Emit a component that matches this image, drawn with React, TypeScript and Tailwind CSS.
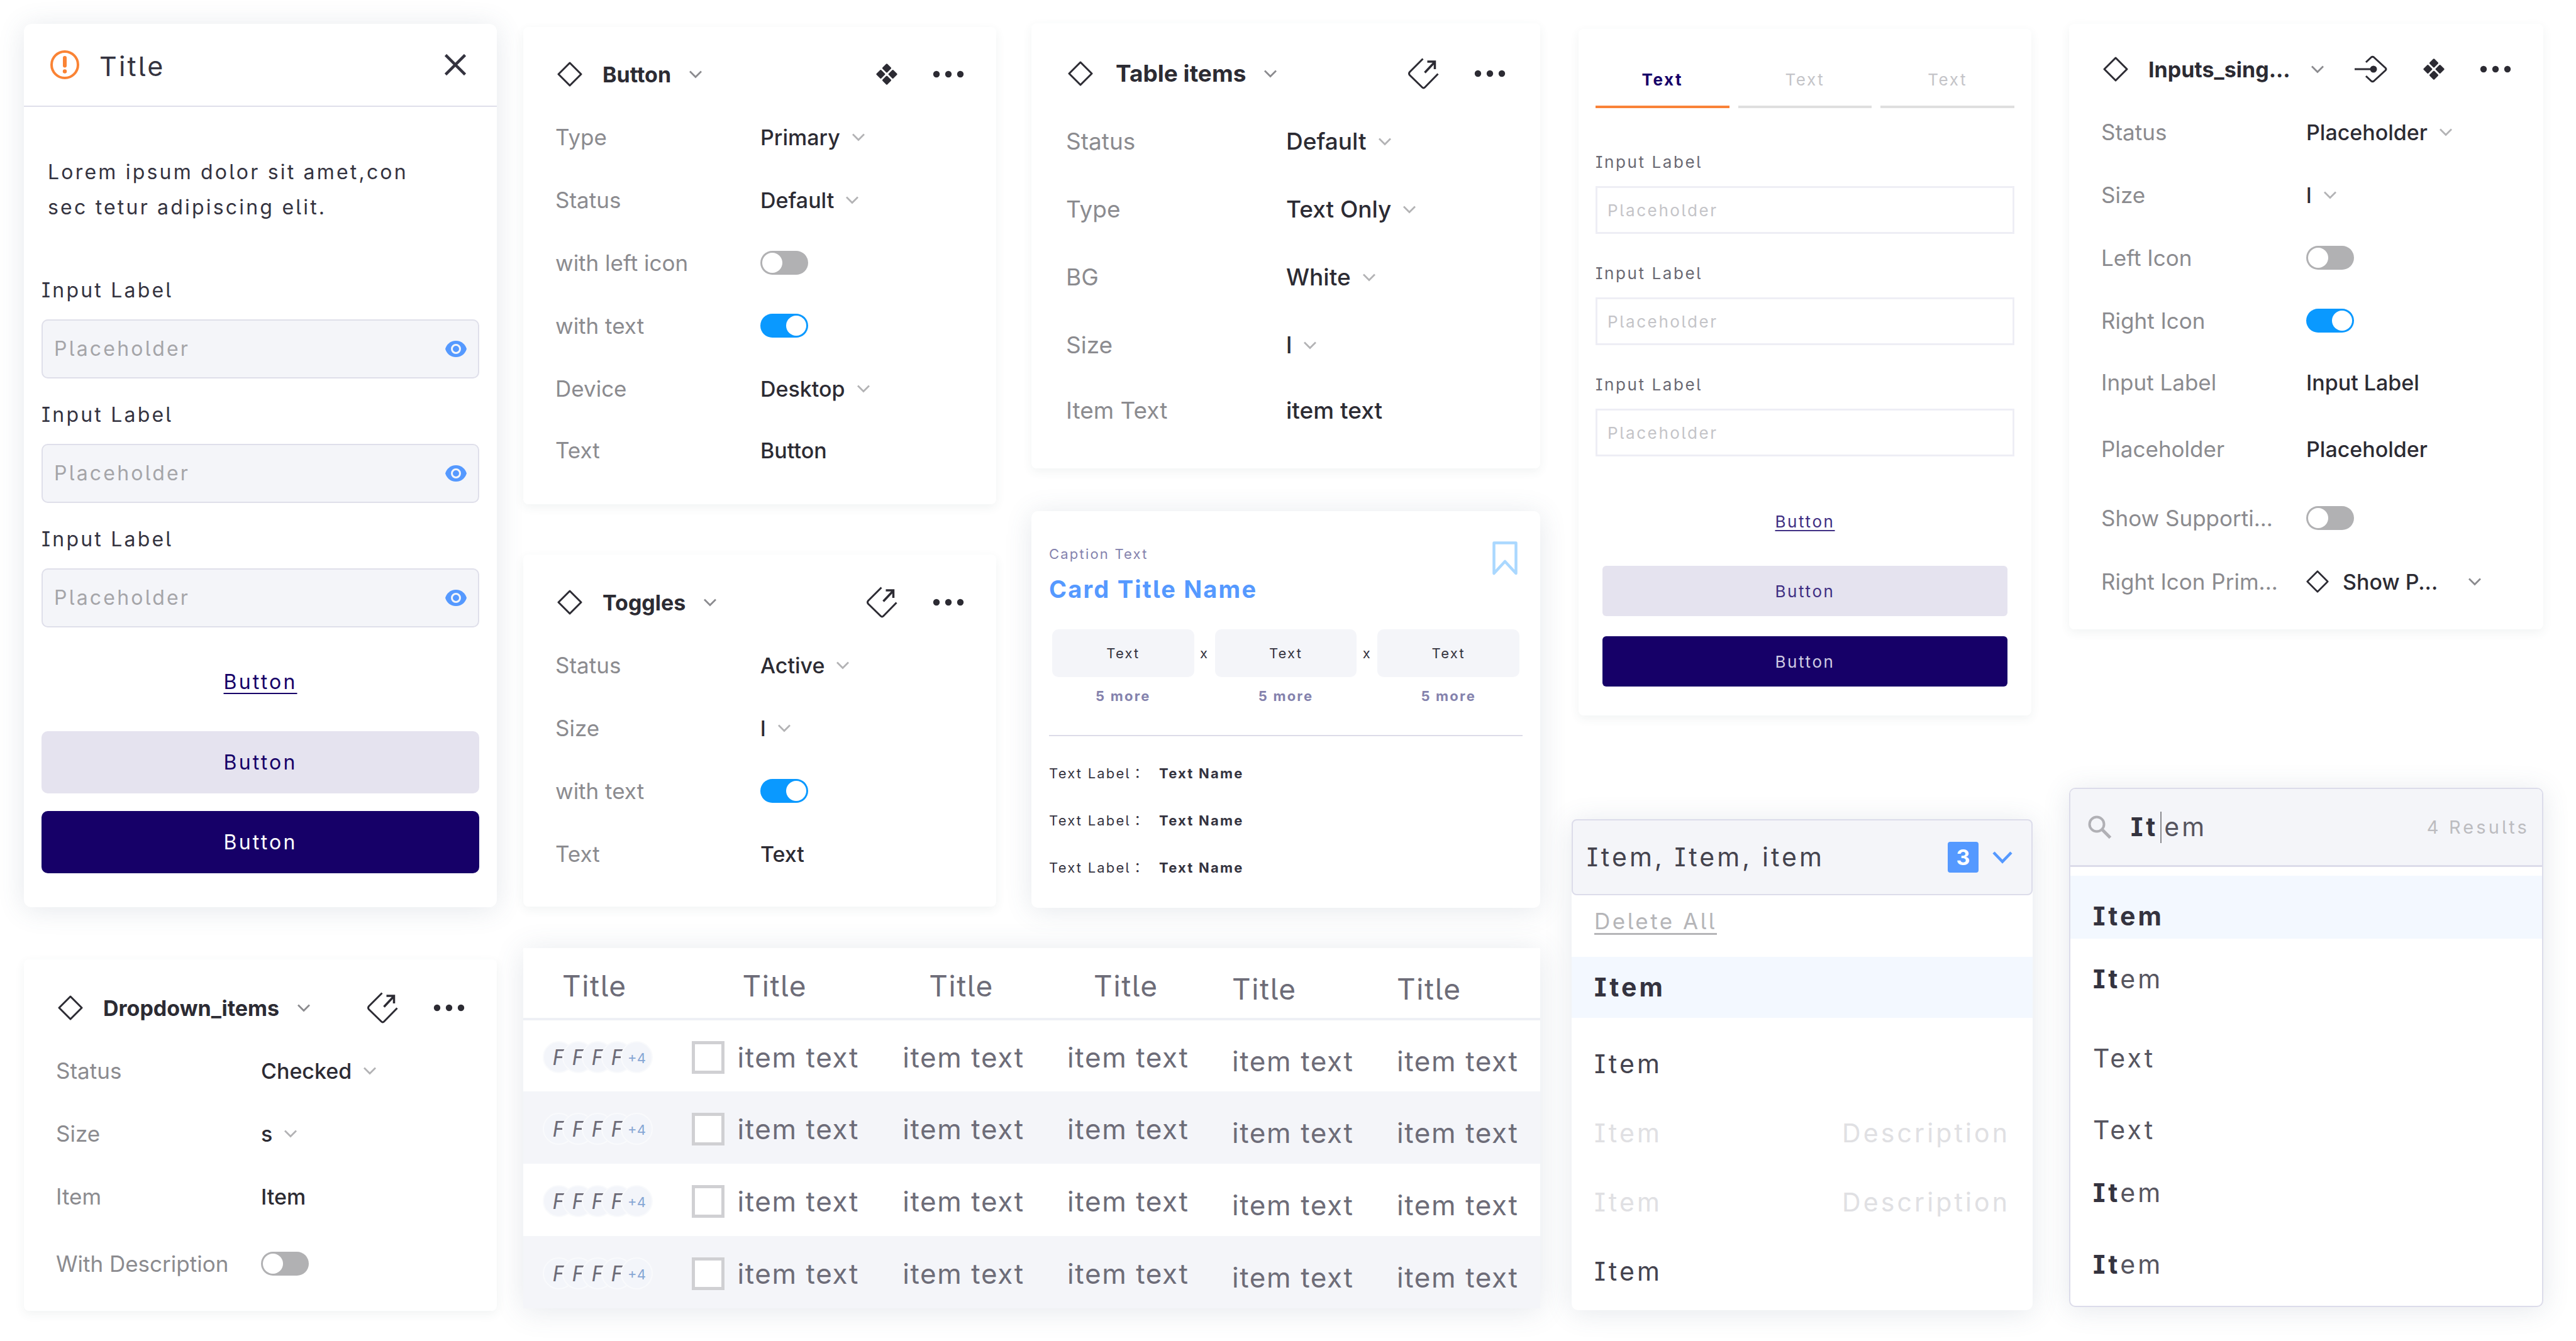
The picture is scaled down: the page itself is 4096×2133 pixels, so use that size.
import { Fragment, useId } from "react";
import type { ReactNode } from "react";

const raised = "bg-white shadow-[0_4px_44px_rgba(70,90,120,0.14)]";
const flat = "bg-white shadow-[0_5px_16px_rgba(60,90,80,0.07)]";
const spaced = "tracking-widest [font-feature-settings:'cv05','cv08']";

/* ---------- icons ---------- */

function Chevron({ className }: { className: string }) {
  return (
    <svg viewBox="0 0 22 14" className={className} fill="none" stroke="currentColor" aria-hidden="true">
      <path d="M2 2.5 11 11.5 20 2.5" strokeWidth="2.8" />
    </svg>
  );
}

function Diamond({ className }: { className: string }) {
  return (
    <svg viewBox="0 0 40 40" className={className} fill="none" stroke="currentColor" strokeWidth="3" strokeLinejoin="round" aria-hidden="true">
      <path d="M20 2 38 20 20 38 2 20Z" />
    </svg>
  );
}

function ComponentIcon() {
  return (
    <svg viewBox="0 0 34 34" className="size-[34px]" fill="currentColor" aria-hidden="true">
      {[
        [17, 7.4],
        [7.4, 17],
        [26.6, 17],
        [17, 26.6],
      ].map(([x, y]) => (
        <path
          key={`${x}-${y}`}
          d={`M${x} ${y - 5.5}L${x + 5.5} ${y}L${x} ${y + 5.5}L${x - 5.5} ${y}Z`}
          stroke="currentColor"
          strokeWidth="3"
          strokeLinejoin="round"
        />
      ))}
    </svg>
  );
}

function DetachIcon() {
  return (
    <svg viewBox="0 0 50 50" className="size-[50px]" fill="none" stroke="currentColor" strokeWidth="3" strokeLinejoin="round" aria-hidden="true">
      <path d="M24.500 1.500 3.500 22.500Q1.500 25 3.500 27.500L23.500 47Q25.500 49 27.500 47L48.500 25.500" />
      <path d="M27.500 23.500 43 7M31.500 6H43.500V18" strokeWidth="3.500" strokeLinejoin="miter" />
    </svg>
  );
}

function EnterIcon() {
  return (
    <svg viewBox="0 0 54 44" className="h-11 w-[54px]" fill="none" stroke="currentColor" strokeWidth="3" strokeLinejoin="round" aria-hidden="true">
      <path d="M1 22H30" />
      <path d="M19 11 27.500 3Q29.500 1.500 31.500 3L50 20Q52 22 50 24L31.500 41Q29.500 42.500 27.500 41L19 33" />
      <circle cx="31" cy="22" r="5.500" fill="currentColor" stroke="none" />
    </svg>
  );
}

function Dots() {
  return (
    <svg viewBox="0 0 50 12" className="h-3 w-[50px]" fill="currentColor" aria-hidden="true">
      <circle cx="6" cy="6" r="5.200" />
      <circle cx="25" cy="6" r="5.200" />
      <circle cx="44" cy="6" r="5.200" />
    </svg>
  );
}

function Eye() {
  return (
    <svg viewBox="0 0 34 26" className="h-[26px] w-[34px]" aria-hidden="true">
      <path d="M17 0C26 0 32 6 34 13C32 20 26 26 17 26C8 26 2 20 0 13C2 6 8 0 17 0Z" fill="#5599ff" />
      <circle cx="17" cy="13" r="6.500" fill="#5599ff" stroke="#f4f5f9" strokeWidth="3" />
    </svg>
  );
}

/* ---------- property panels ---------- */

type Row = {
  label: string;
  kind: "select" | "text" | "toggle" | "swap";
  value?: string;
  on?: boolean;
  height?: string;
};

function PropertyRow({ row, large }: { row: Row; large: boolean }) {
  const id = useId();
  const height = row.height ?? (large ? "h-[108px]" : "h-[100px]");
  const columns = large ? "grid-cols-[350px_1fr]" : "grid-cols-[326px_1fr]";
  return (
    <div className={`grid items-center ${columns} ${height}`}>
      <label htmlFor={id} className={`truncate text-[#8b8b8f] ${large ? "" : "text-[35px]"}`}>
        {row.label}
      </label>
      {row.kind === "select" && (
        <div className="flex items-center gap-[18px]">
          <select id={id} defaultValue={row.value} className="field-sizing-content cursor-pointer appearance-none bg-transparent font-medium">
            <option>{row.value}</option>
          </select>
          <Chevron className="h-3.5 w-[22px] text-[#b3b3b5]" />
        </div>
      )}
      {row.kind === "text" && (
        <input id={id} type="text" defaultValue={row.value} className="w-full min-w-0 bg-transparent font-medium outline-none" />
      )}
      {row.kind === "toggle" && (
        <input
          id={id}
          type="checkbox"
          role="switch"
          defaultChecked={row.on}
          className="h-[38px] w-[76px] cursor-pointer appearance-none rounded-full bg-[#b1b1b3] p-[3px] before:block before:size-8 before:rounded-full before:bg-white checked:bg-[#0a99ff] checked:before:ml-[38px]"
        />
      )}
      {row.kind === "swap" && (
        <button id={id} type="button" className="flex cursor-pointer items-center font-medium">
          <Diamond className="size-9" />
          <span className="ml-[22px]">{row.value}</span>
          <Chevron className="ml-12 h-3.5 w-[22px] text-[#8b8b8f]" />
        </button>
      )}
    </div>
  );
}

function PropertyPanel({
  title,
  icons,
  rows,
  large = false,
  titleGap = "gap-7",
  className,
}: {
  title: string;
  icons: { name: string; icon: ReactNode }[];
  rows: Row[];
  large?: boolean;
  titleGap?: string;
  className: string;
}) {
  return (
    <section className={`rounded-lg text-[#2c2b33] ${large ? "px-[55px] text-[37px]" : "px-[51px] text-[34px]"} ${flat} ${className}`}>
      <header className={`flex items-center justify-between pl-[3px] ${large ? "h-[108px]" : "h-[100px]"}`}>
        <h2 className="font-bold">
          <button type="button" className={`flex cursor-pointer items-center ${titleGap}`}>
            <span className={`flex items-center ${large ? "gap-9" : "gap-8"}`}>
              <Diamond className="size-10" />
              {title}
            </span>
            <Chevron className="h-3.5 w-[22px] text-[#8b8b8f]" />
          </button>
        </h2>
        <div className="flex items-center gap-14">
          {icons.map(({ name, icon }) => (
            <button key={name} type="button" aria-label={name} className="cursor-pointer">
              {icon}
            </button>
          ))}
          <button type="button" aria-label="More" className="cursor-pointer">
            <Dots />
          </button>
        </div>
      </header>
      {rows.map((row) => (
        <PropertyRow key={row.label} row={row} large={large} />
      ))}
    </section>
  );
}

const detach = { name: "Go to main component", icon: <DetachIcon /> };
const component = { name: "Component", icon: <ComponentIcon /> };
const enter = { name: "Nested instance", icon: <EnterIcon /> };

/* ---------- modal ---------- */

function ModalField() {
  const id = useId();
  return (
    <div>
      <label htmlFor={id} className="block leading-11">
        Input Label
      </label>
      <div className="mt-6 flex h-[94px] items-center rounded-[10px] border-2 border-[#dfdfea] bg-[#f4f5f9] px-[18px]">
        <input id={id} type="text" placeholder="Placeholder" className="min-w-0 flex-1 bg-transparent tracking-widest outline-none placeholder:text-[#a5a5a9]" />
        <button type="button" aria-label="Show value" className="cursor-pointer">
          <Eye />
        </button>
      </div>
    </div>
  );
}

function Modal() {
  return (
    <section role="dialog" aria-label="Title" className={`rounded-xl pb-[54px] text-[32px] text-[#34333f] ${raised} ${spaced}`}>
      <header className="flex h-[132px] items-center border-b-2 border-[#dfdfea] pr-[49px] pl-[42px]">
        <svg viewBox="0 0 46 46" className="size-[46px]" aria-hidden="true">
          <circle cx="23" cy="23" r="21" fill="none" stroke="#fa8334" strokeWidth="4" />
          <path d="M23 12V24.500" stroke="#fa8334" strokeWidth="6" strokeLinecap="round" />
          <circle cx="23" cy="33.500" r="3.200" fill="#fa8334" />
        </svg>
        <h2 className="ml-8 flex-1 pt-1 text-[43px]">Title</h2>
        <button type="button" aria-label="Close" className="cursor-pointer">
          <svg viewBox="0 0 34 34" className="size-[34px]" fill="none" stroke="currentColor" strokeWidth="4.500" aria-hidden="true">
            <path d="M1.500 1.500 32.500 32.500M32.500 1.500 1.500 32.500" />
          </svg>
        </button>
      </header>
      <div className="px-7 pt-[76px]">
        <p className="px-2.5 leading-14">
          Lorem ipsum dolor sit amet,con
          <br />
          sec tetur adipiscing elit.
        </p>
        <div className="mt-[82px] flex flex-col gap-9">
          <ModalField />
          <ModalField />
          <ModalField />
        </div>
        <div className="mt-[67px] flex flex-col text-[#160068]">
          <a href="#button" className="self-center leading-10 underline decoration-2 underline-offset-[6px]">
            Button
          </a>
          <button type="button" className="mt-[58px] h-[99px] cursor-pointer rounded-[10px] bg-[#e5e3ef]">
            Button
          </button>
          <button type="button" className="mt-7 h-[99px] cursor-pointer rounded-[10px] bg-[#160068] text-white">
            Button
          </button>
        </div>
      </div>
    </section>
  );
}

/* ---------- summary card ---------- */

function SummaryCard() {
  return (
    <section className={`mt-17 rounded-[10px] px-7 pt-[52px] pb-[26px] text-[22px] text-[#34333f] ${raised} ${spaced}`}>
      <div className="flex items-start justify-between pr-2">
        <div>
          <p className="leading-8 text-[#8482ad]">Caption Text</p>
          <h2 className="mt-4 text-[38px] leading-12 font-bold text-[#5599ff]">Card Title Name</h2>
        </div>
        <button type="button" aria-label="Bookmark" className="-mt-1 cursor-pointer">
          <svg viewBox="0 0 40 54" className="h-[54px] w-10" fill="none" stroke="#aad8ff" strokeWidth="4.500" strokeLinejoin="round" aria-hidden="true">
            <path d="M2.500 2.500H37.500V51L20 32 2.500 51Z" />
          </svg>
        </button>
      </div>
      <div className="mt-10 flex px-[5px] text-center">
        {[0, 1, 2].map((i) => (
          <Fragment key={i}>
            {i > 0 && <span className="w-[33px] leading-[76px]">x</span>}
            <div className="flex-1">
              <button type="button" className="block h-[76px] w-full cursor-pointer rounded-[10px] bg-[#f4f5f9]">
                Text
              </button>
              <p className="mt-3.5 leading-8 font-bold text-[#8482ad]">5 more</p>
            </div>
          </Fragment>
        ))}
      </div>
      <dl className="mt-[46px] border-t-2 border-[#dcdbe8] pt-[22px]">
        {[0, 1, 2].map((i) => (
          <div key={i} className="grid h-[75px] grid-cols-[175px_1fr] items-center">
            <dt className="font-['Inter','Noto_Sans_CJK_JP',sans-serif] whitespace-nowrap">Text Label：</dt>
            <dd className="font-bold">Text Name</dd>
          </div>
        ))}
      </dl>
    </section>
  );
}

/* ---------- data table ---------- */

function DataTable() {
  return (
    <table className={`mt-[64px] w-full table-fixed border-collapse text-left text-[#6d6c78] ${raised} ${spaced}`}>
      <colgroup>
        <col className="w-[16.6%]" />
        <col className="w-[20.7%]" />
        <col className="w-[16.2%]" />
        <col className="w-[16.2%]" />
        <col className="w-[16.2%]" />
        <col className="w-[14.1%]" />
      </colgroup>
      <thead>
        <tr className="h-[113px] border-b-4 border-[#eef0f5] text-[46px]">
          {["pl-[62px]", "pl-20", "pl-[42px]", "pl-[42px]", "", ""].map((pad, i) => (
            <th key={i} scope="col" className={`font-normal ${pad} ${i > 3 ? "pt-5" : "pt-2.5"}`}>
              Title
            </th>
          ))}
        </tr>
      </thead>
      <tbody>
        {[0, 1, 2, 3].map((r) => (
          <tr key={r} className="h-[115px] text-[44px] whitespace-nowrap odd:bg-white even:bg-[#f4f5f9]">
            <td className="pt-1 pl-[31px]">
              <div className="flex -space-x-5 tracking-normal italic">
                {[0, 1, 2, 3].map((a) => (
                  <span key={a} className="flex size-[51px] items-center justify-center rounded-full border-2 border-[#f9fafc] bg-[#f3f5fa] text-[34px]">
                    F
                  </span>
                ))}
                <span className="flex size-[51px] items-center justify-center rounded-full border-2 border-[#f9fafc] bg-[#f3f5fa] pt-1 text-[22px] text-[#86a6d4] not-italic">
                  +4
                </span>
              </div>
            </td>
            {[1, 2, 3, 4, 5].map((c) => (
              <td key={c} className={c > 3 ? "pt-4" : "pt-1"}>
                {c === 1 ? (
                  <label className="flex items-center gap-5">
                    <input type="checkbox" className="size-[52px] appearance-none border-5 border-[#d0d0d3] bg-white checked:bg-[#5599ff]" />
                    item text
                  </label>
                ) : (
                  "item text"
                )}
              </td>
            ))}
          </tr>
        ))}
      </tbody>
    </table>
  );
}

/* ---------- tabbed form ---------- */

function FormField() {
  const id = useId();
  return (
    <div>
      <label htmlFor={id} className="block leading-8 text-[#6a6973]">
        Input Label
      </label>
      <input
        id={id}
        type="text"
        placeholder="Placeholder"
        className="mt-[22px] block h-[76px] w-full border-3 border-[#eeeef5] px-4 tracking-widest outline-none placeholder:text-[#c4c4c8]"
      />
    </div>
  );
}

function TabbedForm() {
  return (
    <section className={`mr-0.5 ml-[11px] rounded-lg px-[27px] pt-[50px] pb-[46px] text-[26px] ${flat} ${spaced}`}>
      <div role="tablist" className="grid grid-cols-3 gap-3.5">
        <button role="tab" aria-selected="true" type="button" className="h-[76px] cursor-pointer border-b-4 border-[#f98238] pb-3 font-bold text-[#160068]">
          Text
        </button>
        {[0, 1].map((i) => (
          <button key={i} role="tab" aria-selected="false" type="button" className="h-[76px] cursor-pointer border-b-4 border-[#dfdfdf] pb-3 text-[#c4c4c8]">
            Text
          </button>
        ))}
      </div>
      <div className="mt-[70px] flex flex-col gap-[47px]">
        <FormField />
        <FormField />
        <FormField />
      </div>
      <div className="mt-[88px] flex flex-col px-[11px] text-[#3f2f83]">
        <a href="#button" className="self-center leading-8 underline decoration-2 underline-offset-4">
          Button
        </a>
        <button type="button" className="mt-[54px] h-20 cursor-pointer rounded-md bg-[#e5e3ef]">
          Button
        </button>
        <button type="button" className="mt-8 h-20 cursor-pointer rounded-md bg-[#160068] text-[#cfcbe2]">
          Button
        </button>
      </div>
    </section>
  );
}

/* ---------- multi select ---------- */

function MultiSelect() {
  const items = [
    { name: "Item" },
    { name: "Item", description: "Description" },
    { name: "Item", description: "Description" },
    { name: "Item" },
  ];
  return (
    <section className={`mt-[165px] rounded-[10px] pb-1.5 text-[41px] text-[#44434e] ${raised} ${spaced}`}>
      <button type="button" aria-expanded="true" className="flex h-[121px] w-full cursor-pointer items-center rounded-lg border-2 border-[#dcdcea] bg-[#f4f5f9] pr-[30px] pl-[22px] tracking-widest">
        <span className="flex-1 text-left">Item, Item, item</span>
        <span className="flex size-[49px] items-center justify-center rounded-sm bg-[#5599ff] text-[34px] font-bold tracking-normal text-white">3</span>
        <svg viewBox="0 0 32 20" className="ml-[22px] h-5 w-8" fill="none" stroke="#5599ff" strokeWidth="4.500" aria-hidden="true">
          <path d="M2 2 16 16.500 30 2" />
        </svg>
      </button>
      <div className="flex h-[98px] items-center px-9 pb-4">
        <button type="button" className="cursor-pointer text-[35px] tracking-widest text-[#b5b5b8] underline decoration-3 underline-offset-[6px]">
          Delete All
        </button>
      </div>
      <ul>
        <li className="mb-[19px] flex h-[97px] items-center bg-[#f3f8ff] px-9 font-bold text-[#34333f]">Item</li>
        {items.map((item, i) => (
          <li key={i} className={`flex h-[110px] items-center justify-between px-9 ${item.description ? "text-[#e0e0e3]" : ""}`}>
            <span>{item.name}</span>
            {item.description && <span>{item.description}</span>}
          </li>
        ))}
      </ul>
    </section>
  );
}

/* ---------- search box ---------- */

function SearchBox() {
  const results = [
    { match: "Item", rest: "", gap: "bg-[#f3f8ff]" },
    { match: "It", rest: "em", gap: "" },
    { match: "", rest: "Text", gap: "mt-[26px]" },
    { match: "", rest: "Text", gap: "mt-3.5" },
    { match: "It", rest: "em", gap: "" },
    { match: "It", rest: "em", gap: "mt-3.5" },
  ];
  return (
    <section className={`mt-[252px] overflow-hidden rounded-[10px] border-2 border-[#dcdcea] pb-[30px] text-[41px] text-[#56555f] ${raised} ${spaced}`}>
      <div className="flex h-[124px] items-center border-b-3 border-[#dcdcea] bg-[#f4f5f9] pr-5 pl-7">
        <svg viewBox="0 0 38 38" className="size-[38px]" fill="none" stroke="#b0b0b5" strokeWidth="4" aria-hidden="true">
          <circle cx="14" cy="14" r="11.500" />
          <path d="M22.500 22.500 35.500 35.500" strokeWidth="5" />
        </svg>
        <div className="ml-[30px] flex flex-1 items-center">
          <input type="text" aria-label="Search" defaultValue="It" className="field-sizing-content bg-transparent font-bold tracking-widest text-[#34333f] outline-none" />
          <span className="ml-1 h-[50px] w-0.5 bg-[#8b8b8f]" />
          <span className="ml-1">em</span>
        </div>
        <span className="text-[29px] text-[#bcbcc0]">4 Results</span>
      </div>
      <ul className="pt-3.5">
        {results.map((result, i) => (
          <li key={i} className={`flex h-[100px] items-center px-9 pt-[30px] ${result.gap}`}>
            <strong className="text-[#34333f]">{result.match}</strong>
            {result.rest}
          </li>
        ))}
      </ul>
    </section>
  );
}

/* ---------- page ---------- */

export default function App() {
  return (
    <main className="flex min-h-screen items-start bg-white pr-[52px] pb-11 pl-[38px] font-['Inter','Liberation_Sans',sans-serif] leading-normal">
      <div className="min-w-0 flex-[752] pt-[38px]">
        <Modal />
        <PropertyPanel
          className="mt-[83px] pt-[27px] pb-[18px]"
          title="Dropdown_items"
          icons={[detach]}
          rows={[
            { label: "Status", kind: "select", value: "Checked" },
            { label: "Size", kind: "select", value: "s" },
            { label: "Item", kind: "text", value: "Item" },
            { label: "With Description", kind: "toggle", height: "h-[114px]" },
          ]}
        />
      </div>

      <div className="ml-[42px] min-w-0 flex-[1617]">
        <div className="flex items-start">
          <div className="min-w-0 flex-[752] pt-[43px]">
            <PropertyPanel
              className="pt-[25px] pb-[38px]"
              title="Button"
              icons={[component]}
              rows={[
                { label: "Type", kind: "select", value: "Primary" },
                { label: "Status", kind: "select", value: "Default" },
                { label: "with left icon", kind: "toggle" },
                { label: "with text", kind: "toggle", on: true },
                { label: "Device", kind: "select", value: "Desktop" },
                { label: "Text", kind: "text", value: "Button", height: "h-24" },
              ]}
            />
            <PropertyPanel
              className="mt-20 pt-[26px] pb-[34px]"
              title="Toggles"
              icons={[detach]}
              rows={[
                { label: "Status", kind: "select", value: "Active" },
                { label: "Size", kind: "select", value: "l" },
                { label: "with text", kind: "toggle", on: true },
                { label: "Text", kind: "text", value: "Text" },
              ]}
            />
          </div>
          <div className="ml-14 min-w-0 flex-[809] pt-[37px]">
            <PropertyPanel
              large
              className="pt-[26px] pb-[42px]"
              title="Table items"
              icons={[detach]}
              rows={[
                { label: "Status", kind: "select", value: "Default" },
                { label: "Type", kind: "select", value: "Text Only" },
                { label: "BG", kind: "select", value: "White" },
                { label: "Size", kind: "select", value: "l" },
                { label: "Item Text", kind: "text", value: "item text", height: "h-[100px]" },
              ]}
            />
            <SummaryCard />
          </div>
        </div>
        <DataTable />
      </div>

      <div className="ml-[50px] min-w-0 flex-[733] pt-[46px]">
        <TabbedForm />
        <MultiSelect />
      </div>

      <div className="ml-[58px] min-w-0 flex-[754] pt-[38px]">
        <PropertyPanel
          className="pt-[22px] pb-[27px]"
          title="Inputs_sing..."
          titleGap="gap-8"
          icons={[enter, component]}
          rows={[
            { label: "Status", kind: "select", value: "Placeholder" },
            { label: "Size", kind: "select", value: "l" },
            { label: "Left Icon", kind: "toggle" },
            { label: "Right Icon", kind: "toggle", on: true },
            { label: "Input Label", kind: "text", value: "Input Label", height: "h-[96px]" },
            { label: "Placeholder", kind: "text", value: "Placeholder", height: "h-[116px]" },
            { label: "Show Supporti...", kind: "toggle", height: "h-[104px]" },
            { label: "Right Icon Prim...", kind: "swap", value: "Show P...", height: "h-[98px]" },
          ]}
        />
        <SearchBox />
      </div>
    </main>
  );
}
